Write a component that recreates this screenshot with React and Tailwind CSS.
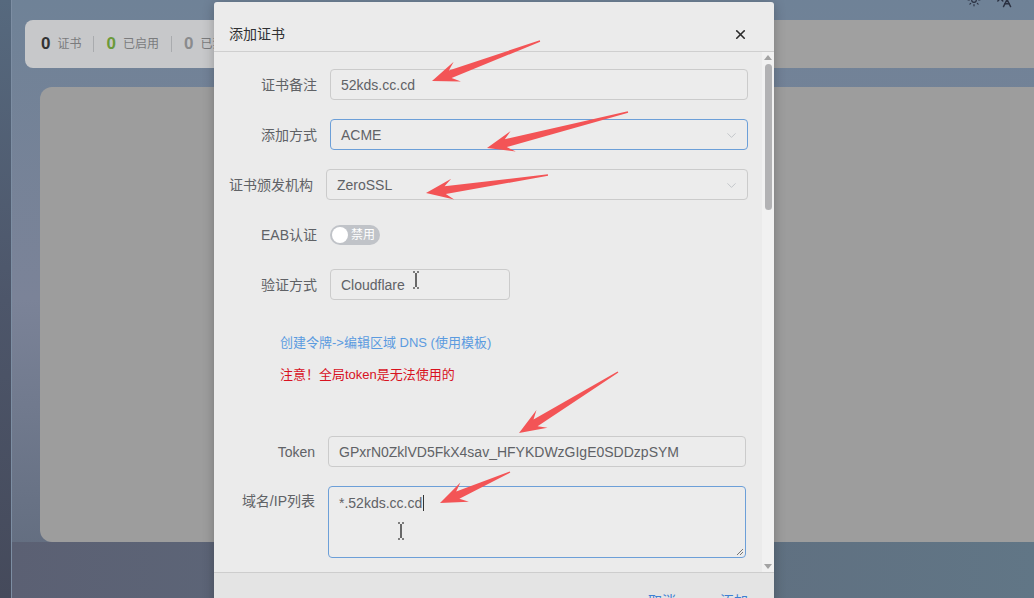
import { X, ChevronDown, Sun, Languages } from "lucide-react";

const font = "font-['Liberation_Sans','Noto_Sans_CJK_SC',sans-serif]";

// red annotation arrows, tail -> tip, in page pixels
const arrows = [
  [[540, 41], [432, 81]],
  [[628, 112], [487, 148]],
  [[548, 175], [426, 193]],
  [[618, 372], [519, 433]],
  [[510, 472], [440, 503]],
];

function arrowPoints([x1, y1], [x2, y2]) {
  const dx = x2 - x1;
  const dy = y2 - y1;
  const len = Math.hypot(dx, dy);
  const ux = dx / len;
  const uy = dy / len;
  const nx = -uy;
  const ny = ux;
  const head = 27;
  const hw = 10.5;
  const sw = 4;
  const tw = 0.7;
  const bx = x2 - ux * head;
  const by = y2 - uy * head;
  const jx = x2 - ux * head * 0.72;
  const jy = y2 - uy * head * 0.72;
  return [
    [x1 + nx * tw, y1 + ny * tw],
    [jx + nx * sw, jy + ny * sw],
    [bx + nx * hw, by + ny * hw],
    [x2, y2],
    [bx - nx * hw, by - ny * hw],
    [jx - nx * sw, jy - ny * sw],
    [x1 - nx * tw, y1 - ny * tw],
  ]
    .map((p) => p.map((v) => v.toFixed(1)).join(","))
    .join(" ");
}

function IBeam({ x, y }) {
  return (
    <path
      d={`M${x - 3},${y - 8} h2 M${x + 1},${y - 8} h2 M${x},${y - 7} v14 M${x - 3},${y + 8} h2 M${x + 1},${y + 8} h2`}
      stroke="#111"
      strokeWidth="1.2"
      fill="none"
    />
  );
}

function Field({ label, labelW = "w-[104px]", right = "mr-[14px]", children }) {
  return (
    <div className="flex items-center">
      <div className={`${labelW} shrink-0 pr-[13px] pt-px text-right text-[14px] text-[#606266]`}>{label}</div>
      <div className={`flex-1 ${right}`}>{children}</div>
    </div>
  );
}

function Input({ value, focused, select, className = "" }) {
  return (
    <div
      className={`flex h-[31px] items-center rounded-[4px] border bg-[#ececec] pl-[10px] pr-[8px] pt-px text-[14px] text-[#606266] ${
        focused ? "border-[#6c9fd8]" : "border-[#cbcbcb]"
      } ${className}`}
    >
      <span className="flex-1">{value}</span>
      {select && <ChevronDown size={15} strokeWidth={1.3} className="text-[#b9bcc2]" />}
    </div>
  );
}

function Stat({ n, color, label }) {
  return (
    <div className="flex items-center gap-[7px]">
      <span className={`text-[17px] font-bold ${color}`}>{n}</span>
      <span className="text-[12px] text-[#7a7b7d]">{label}</span>
    </div>
  );
}

export default function App() {
  return (
    <div className={`relative flex h-[598px] w-[1034px] overflow-hidden bg-[#5e6577] ${font}`}>
      {/* dimmed page behind the dialog */}
      <div className="w-[12px] shrink-0 border-r border-[#7d8ea3] bg-gradient-to-b from-[#56697e] via-[#4d566a] to-[#454a5b]" />
      <div className="flex flex-1 flex-col bg-gradient-to-b from-[#6f8297] via-[#7b8398] to-[#5f6a7c]">
        <div className="flex h-[18px] shrink-0 justify-end gap-[14px] pr-[22px] text-[#2b3142]">
          <Sun size={14} className="-translate-y-[7px]" />
          <Languages size={17} className="-translate-y-[9px]" />
        </div>
        <div className="ml-[13px] mt-[2px] flex h-[48px] shrink-0 overflow-hidden rounded-l-lg">
          <div className="flex w-[560px] shrink-0 items-center bg-[#c7c8ca] pl-[16px]">
            <Stat n="0" color="text-[#333]" label="证书" />
            <div className="mx-[12px] h-[16px] w-px bg-[#a9abae]" />
            <Stat n="0" color="text-[#6b9a3a]" label="已启用" />
            <div className="mx-[12px] h-[16px] w-px bg-[#a9abae]" />
            <Stat n="0" color="text-[#8a8b8d]" label="已禁用" />
          </div>
          <div className="flex-1 bg-[#a0a0a0]" />
        </div>
        <div className="ml-[28px] mt-[19px] h-[455px] shrink-0 rounded-l-xl bg-[#9d9d9d]" />
        <div className="flex-1 bg-gradient-to-r from-[#5b6073] to-[#617686]" />
      </div>

      {/* dialog */}
      <div className="absolute left-[214px] top-[2px] flex h-[630px] w-[560px] flex-col rounded-t-[3px] bg-[#ebebeb] shadow-[0_2px_12px_rgba(0,0,0,0.25)]">
        <div className="flex h-[50px] shrink-0 items-start justify-between border-b border-[#cfcfcf] pl-[15px] pr-[26px] pt-[22px]">
          <span className="text-[14px] leading-5 text-[#303133]">添加证书</span>
          <X size={15} strokeWidth={2.6} className="mt-[3px] text-[#2a2a2a]" />
        </div>

        <div className="flex h-[520px] shrink-0">
          <div className="flex-1 overflow-hidden pl-[12px] pt-[17px]">
            <Field label="证书备注">
              <Input value="52kds.cc.cd" />
            </Field>
            <div className="mt-[19px]">
              <Field label="添加方式">
                <Input value="ACME" focused select />
              </Field>
            </div>
            <div className="mt-[19px]">
              <Field label="证书颁发机构" labelW="w-[100px]">
                <Input value="ZeroSSL" select />
              </Field>
            </div>
            <div className="mt-[19px] flex h-[31px] items-center">
              <div className="w-[104px] shrink-0 pr-[13px] pt-px text-right text-[14px] text-[#606266]">EAB认证</div>
              <div className="flex h-[20px] w-[50px] items-center rounded-full bg-[#c0c3c8] pl-[2px]">
                <div className="h-[16px] w-[16px] rounded-full bg-white" />
                <span className="ml-[3px] text-[12px] leading-none text-white">禁用</span>
              </div>
            </div>
            <div className="mt-[19px]">
              <Field label="验证方式">
                <Input value="Cloudflare" className="w-[180px]" />
              </Field>
            </div>
            <div className="mt-[33px] pl-[54px] text-[13px] leading-5 text-[#5b9be0]">
              创建令牌-&gt;编辑区域 DNS (使用模板)
            </div>
            <div className="mt-[12px] pl-[54px] text-[13px] leading-5 text-[#d8121f]">
              注意！全局token是无法使用的
            </div>
            <div className="mt-[51px]">
              <Field label="Token" labelW="w-[102px]" right="mr-[16px]">
                <Input value="GPxrN0ZklVD5FkX4sav_HFYKDWzGIgE0SDDzpSYM" />
              </Field>
            </div>
            <div className="mt-[19px] flex items-start">
              <div className="w-[102px] shrink-0 pr-[13px] pt-[5px] text-right text-[14px] text-[#606266]">域名/IP列表</div>
              <div className="relative mr-[16px] h-[72px] flex-1 rounded-[4px] border border-[#6c9fd8] bg-[#ececec] pl-[10px] pt-[5px] text-[14px] text-[#606266]">
                <span>*.52kds.cc.cd</span>
                <span className="ml-px inline-block h-[16px] w-px translate-y-[3px] bg-[#333]" />
                <svg width="9" height="9" className="absolute bottom-[1px] right-[1px]" viewBox="0 0 9 9">
                  <path d="M8,2 L2,8 M8,5 L5,8" stroke="#777" strokeWidth="1" />
                </svg>
              </div>
            </div>
          </div>

          {/* scrollbar */}
          <div className="flex w-[12px] shrink-0 flex-col items-center bg-[#f1f1f1] py-[3px]">
            <div className="h-0 w-0 border-x-[4px] border-b-[5px] border-x-transparent border-b-[#a3a3a3]" />
            <div className="mt-[4px] h-[146px] w-[7px] rounded-full bg-[#b2b2b4]" />
            <div className="flex-1" />
            <div className="h-0 w-0 border-x-[4px] border-t-[5px] border-x-transparent border-t-[#a3a3a3]" />
          </div>
        </div>

        <div className="flex flex-1 justify-end gap-[44px] border-t border-[#cdcdcd] bg-[#e4e4e4] pr-[26px] pt-[18px] text-[14px] text-[#3d7fd3]">
          <span>取消</span>
          <span>添加</span>
        </div>
      </div>

      {/* annotations and pointer */}
      <svg className="pointer-events-none absolute inset-0" width="1034" height="598">
        {arrows.map(([a, b], i) => (
          <polygon key={i} points={arrowPoints(a, b)} fill="#f35456" />
        ))}
        <IBeam x={416} y={280} />
        <IBeam x={401} y={531} />
      </svg>
    </div>
  );
}
